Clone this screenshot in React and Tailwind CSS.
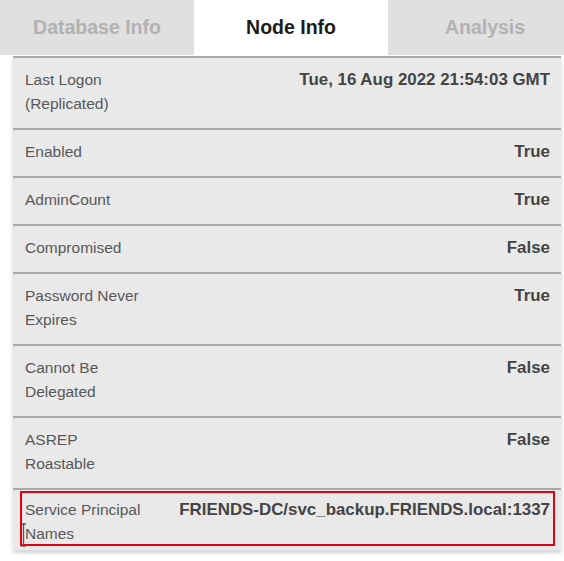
import React from "react";

const rows = [
  { label: ["Last Logon", "(Replicated)"], value: "Tue, 16 Aug 2022 21:54:03 GMT" },
  { label: ["Enabled"], value: "True" },
  { label: ["AdminCount"], value: "True" },
  { label: ["Compromised"], value: "False" },
  { label: ["Password Never", "Expires"], value: "True" },
  { label: ["Cannot Be", "Delegated"], value: "False" },
  { label: ["ASREP", "Roastable"], value: "False" },
];

function Row({ label, value }) {
  return (
    <div className="flex items-start justify-between border-b-2 border-[#a9a9a9] pt-[10px] pb-[12px] pl-[12px] pr-[11px]">
      <div className="w-[122px] text-[15.5px] leading-[24px] text-[#585858]">
        {label.map((l, i) => (
          <div key={i}>{l}</div>
        ))}
      </div>
      <div className="text-[16.9px] leading-[24px] font-bold text-[#444444] whitespace-nowrap">{value}</div>
    </div>
  );
}

export default function App() {
  return (
    <div
      className="relative w-[564px] h-[561px] overflow-hidden bg-white"
      style={{ fontFamily: '"Liberation Sans", Arial, sans-serif' }}
    >
      <div className="flex h-[55px] w-[582px]">
        <div className="flex w-[194px] items-center justify-center bg-[#e0e0e0] text-[19.5px] font-bold text-[#b2b2b2]">
          Database Info
        </div>
        <div className="flex w-[194px] items-center justify-center bg-white text-[19.5px] font-bold text-[#1c1c1c]">
          Node Info
        </div>
        <div className="flex w-[194px] items-center justify-center bg-[#e0e0e0] text-[19.5px] font-bold text-[#b2b2b2]">
          Analysis
        </div>
      </div>
      <div className="ml-[13px] mt-[1px] w-[548px] border-t-2 border-[#a9a9a9] bg-[#e9e9e9] shadow-[0_3px_4px_rgba(0,0,0,0.18)]">
        {rows.map((r, i) => (
          <Row key={i} label={r.label} value={r.value} />
        ))}
        <div className="flex items-start justify-between pt-[8px] pb-[4px] pl-[12px] pr-[11px]">
          <div className="w-[122px] text-[15.5px] leading-[24px] text-[#585858]">
            <div>Service Principal</div>
            <div>Names</div>
          </div>
          <div className="text-[16.9px] leading-[24px] font-bold text-[#444444] whitespace-nowrap">
            FRIENDS-DC/svc_backup.FRIENDS.local:1337
          </div>
        </div>
      </div>
      <div className="absolute left-[20px] top-[491px] h-[55px] w-[535px] border-[2.5px] border-[#e3000f]" />
      <svg className="absolute left-[20px] top-[523px]" width="7" height="24" viewBox="0 0 7 24">
        <path d="M1 1h5M3.5 1v22M1 23h5" stroke="#555" strokeWidth="1.3" fill="none" />
      </svg>
    </div>
  );
}
